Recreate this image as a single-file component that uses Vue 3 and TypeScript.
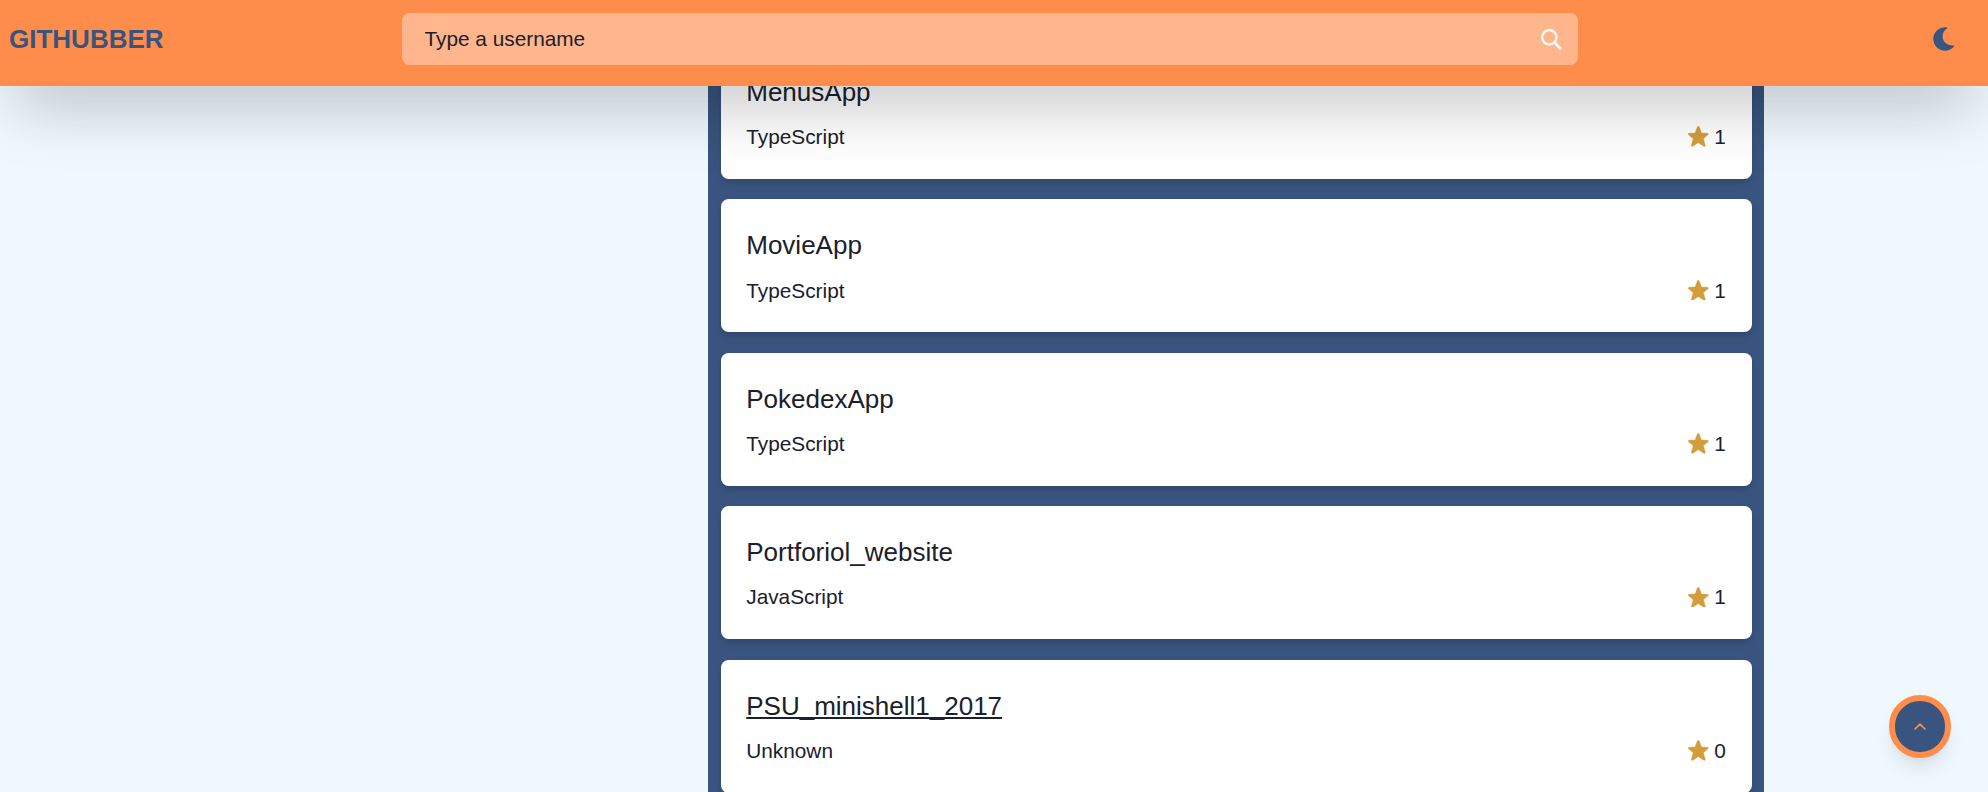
<script setup lang="ts">
interface Repo {
  name: string
  language: string
  stars: number
  active?: boolean
}

const repos: Repo[] = [
  { name: 'MenusApp', language: 'TypeScript', stars: 1 },
  { name: 'MovieApp', language: 'TypeScript', stars: 1 },
  { name: 'PokedexApp', language: 'TypeScript', stars: 1 },
  { name: 'Portforiol_website', language: 'JavaScript', stars: 1 },
  { name: 'PSU_minishell1_2017', language: 'Unknown', stars: 0, active: true },
]
</script>

<template>
  <div class="page">
    <header class="header">
      <h1 class="brand">GITHUBBER</h1>
      <label class="search">
        <input class="search-input" type="text" placeholder="Type a username" aria-label="Username" />
        <svg class="search-icon" viewBox="0 0 21 21" fill="none" stroke="#fff" stroke-width="2.2">
          <circle cx="8.3" cy="8.3" r="7.2" />
          <path d="M13.3 13.3 20 20" stroke-width="2.6" />
        </svg>
      </label>
      <button class="theme" aria-label="Toggle theme">
        <svg viewBox="0 0 22 24" fill="#39547e">
          <path d="M14.2.7C12.800.300 11.800.3 11 .400 5 .8.3 5.800.3 12c0 6.500 5.200 11.700 11.600 11.700 4 0 7.400-1.700 9.400-4.700.2-.4 0-.7-.5-.6C14.300 18.900 9.600 14.800 9.600 9.200c0-3.300 1.800-6.300 4.700-7.900.3-.2.300-.500-.1-.6Z" />
        </svg>
      </button>
    </header>

    <main class="content">
      <section class="repos">
        <article v-for="repo in repos" :key="repo.name" class="card">
          <a class="name" :class="{ active: repo.active }">{{ repo.name }}</a>
          <div class="meta">
            <span>{{ repo.language }}</span>
            <span class="stars">
              <svg class="star" viewBox="0 0 24 24" fill="#d49c3a" stroke="#d49c3a" stroke-width="0.5" stroke-linejoin="round">
                <path d="M23.600 9.100a1 1 0 0 0-.9-.7l-6.700-.1a.3.3 0 0 1-.3-.2L13.100 1.100a1.200 1.200 0 0 0-2.200 0L8.300 8.100a.3.3 0 0 1-.3.2l-6.700.1a1.100 1.100 0 0 0-.7 1.900l5.300 4.300a.3.3 0 0 1 .1.4L4 22.200a1.100 1.100 0 0 0 1.700 1.300l6.100-4a.3.3 0 0 1 .4 0l6.100 4a1.100 1.100 0 0 0 1.700-1.300L18 15a.3.3 0 0 1 .1-.4l5.200-4.300a1.100 1.100 0 0 0 .3-1.200Z" />
              </svg>
              {{ repo.stars }}
            </span>
          </div>
        </article>
      </section>
    </main>

    <button class="to-top" aria-label="Back to top">
      <svg viewBox="0 0 12 7" fill="none" stroke="#fe8d4b" stroke-width="1.7" stroke-linecap="round" stroke-linejoin="round">
        <path d="M1 6 6 1.100 11 6" />
      </svg>
    </button>
  </div>
</template>

<style>
body {
  margin: 0;
  background: #f0f8ff;
}
</style>

<style scoped>
.page {
  height: 100vh;
  overflow: hidden;
  display: flex;
  flex-direction: column;
  background: #f0f8ff;
  color: #1a202c;
  font-family: "Liberation Sans", Arial, sans-serif;
  font-size: 20.8px;
  line-height: 30.9px;
}

.header {
  flex: none;
  z-index: 2;
  box-sizing: border-box;
  height: 86px;
  padding: 13px 33px 21px 9px;
  display: grid;
  grid-template-columns: 393px 1176px 1fr;
  align-items: center;
  background: #fe8d4b;
  box-shadow: 0 32px 64px -15px rgba(0, 0, 0, 0.25);
}

.brand {
  margin: 0;
  font-size: 26px;
  font-weight: 700;
  color: #39547e;
}

.search {
  box-sizing: border-box;
  height: 52px;
  padding: 0 16px 0 22.500px;
  display: flex;
  align-items: center;
  border-radius: 7.7px;
  background: #ffb68c;
}

.search-input {
  flex: 1;
  padding: 0;
  border: 0;
  outline: 0;
  background: transparent;
  font: inherit;
  color: inherit;
}

.search-input::placeholder {
  color: #1a202c;
  opacity: 1;
}

.search-icon {
  width: 21px;
  height: 21px;
}

.theme {
  justify-self: end;
  padding: 0;
  border: 0;
  background: none;
  display: flex;
}

.theme svg {
  width: 22px;
  height: 24px;
}

.content {
  flex: none;
  margin-top: -60px;
  padding: 0 224px 0 708px;
}

.repos {
  padding: 19.900px 12.500px 21px;
  display: flex;
  flex-direction: column;
  gap: 20.800px;
  background: #39547e;
}

.card {
  box-sizing: border-box;
  height: 132.700px;
  padding: 25.750px;
  display: flex;
  flex-direction: column;
  border-radius: 7.700px;
  background: #fff;
  box-shadow: 0 5px 8px -1px rgba(0, 0, 0, 0.1), 0 3px 5px -1px rgba(0, 0, 0, 0.06);
}

.name {
  align-self: flex-start;
  margin-bottom: 9.800px;
  font-size: 26px;
  line-height: 40.600px;
}

.name.active {
  text-decoration: underline;
  text-decoration-skip-ink: none;
}

.meta {
  display: flex;
  justify-content: space-between;
}

.stars {
  display: flex;
  align-items: center;
  gap: 5.500px;
}

.star {
  width: 20.600px;
  height: 20.600px;
  margin-top: -2px;
}

.to-top {
  position: fixed;
  right: 36.900px;
  bottom: 34.100px;
  z-index: 3;
  box-sizing: border-box;
  width: 62.600px;
  height: 62.600px;
  padding: 0;
  display: flex;
  align-items: center;
  justify-content: center;
  border: 6.500px solid #fe8d4b;
  border-radius: 50%;
  background: #39547e;
  box-shadow: 0 13px 19px -4px rgba(0, 0, 0, 0.1), 0 5px 8px -3px rgba(0, 0, 0, 0.05);
}

.to-top svg {
  width: 12px;
  height: 7px;
}
</style>
